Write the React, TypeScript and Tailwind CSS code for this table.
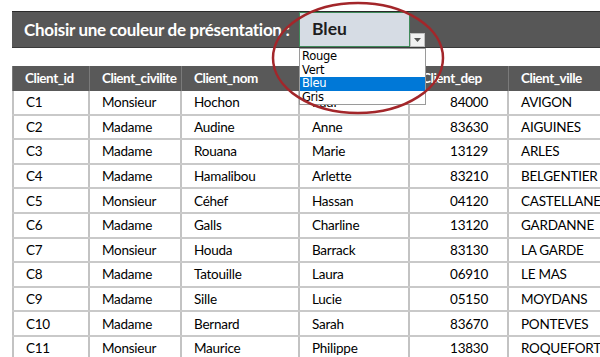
import React from "react";

const rows: string[][] = [
  ["C1", "Monsieur", "Hochon", "Paul", "84000", "AVIGON"],
  ["C2", "Madame", "Audine", "Anne", "83630", "AIGUINES"],
  ["C3", "Madame", "Rouana", "Marie", "13129", "ARLES"],
  ["C4", "Madame", "Hamalibou", "Arlette", "83210", "BELGENTIER"],
  ["C5", "Monsieur", "Céhef", "Hassan", "04120", "CASTELLANE"],
  ["C6", "Madame", "Galls", "Charline", "13120", "GARDANNE"],
  ["C7", "Monsieur", "Houda", "Barrack", "83130", "LA GARDE"],
  ["C8", "Madame", "Tatouille", "Laura", "06910", "LE MAS"],
  ["C9", "Madame", "Sille", "Lucie", "05150", "MOYDANS"],
  ["C10", "Madame", "Bernard", "Sarah", "83670", "PONTEVES"],
  ["C11", "Monsieur", "Maurice", "Philippe", "13830", "ROQUEFORT LES PINS"],
];

const headers = ["Client_id", "Client_civilite", "Client_nom", "Client_prenom", "Client_dep", "Client_ville"];

const grid = "grid grid-cols-[78px_92px_118px_110px_99px_140px]";

export default function App() {
  return (
    <div
      className="relative w-[600px] h-[357px] overflow-hidden bg-white pt-[11px] pl-[12px]"
      style={{ fontFamily: "Lato, 'Open Sans', sans-serif" }}
    >
      {/* Title bar */}
      <div className="flex h-[37px] w-[637px] items-stretch bg-[#575757] border-t border-t-[#2a2a2a] border-b border-b-[#3a3a3a]">
        <div className="flex w-[287px] items-center whitespace-nowrap pl-[12px] text-[17px] font-bold tracking-[-0.3px] text-white">
          Choisir une couleur de présentation :
        </div>
        <div className="flex w-[111px] items-center border border-[#3f8a5a] bg-[#d6dce4] pl-[12px] text-[17.5px] font-bold text-[#1e1e1e]">
          Bleu
        </div>
        <div className="flex flex-col justify-end">
          <div className="flex h-[14px] w-[15px] items-center justify-center border border-[#bfbfbf] bg-[#f2f2f2]">
            <svg width="7" height="4" viewBox="0 0 7 4">
              <path d="M0 0 L7 0 L3.5 4 Z" fill="#555" />
            </svg>
          </div>
        </div>
      </div>

      {/* Table */}
      <div className="mt-[18px] w-[637px]">
        <div className={`${grid} h-[25px] bg-[#595959] text-[13.5px] font-bold tracking-[-0.45px] text-white`}>
          {headers.map((h, i) => (
            <div
              key={h}
              className={`flex items-center whitespace-nowrap border-r border-r-[#7a7a7a] ${i === 0 ? "border-l border-l-[#7a7a7a]" : ""} pl-[12px]`}
            >
              {h}
            </div>
          ))}
        </div>
        {rows.map((r) => (
          <div key={r[0]} className={`${grid} h-[24.6px] border-b-2 border-b-[#c9c9c9] text-[13.5px] tracking-[-0.25px] text-black`}>
            {r.map((c, i) => (
              <div
                key={i}
                className={`flex items-center border-r-2 border-r-[#c3c3c3] ${i === 0 ? "border-l-2 border-l-[#c3c3c3]" : ""} ${
                  i === 4 ? "justify-end pr-[19px]" : "pl-[12px]"
                } whitespace-nowrap overflow-hidden`}
              >
                {c}
              </div>
            ))}
          </div>
        ))}
      </div>

      {/* Dropdown list */}
      <div
        className="absolute left-[299px] top-[48px] w-[127px] border border-[#9a9a9a] bg-white pt-[1px] text-[11.5px] leading-[13.5px] text-black"
        style={{ fontFamily: "'DejaVu Sans', Tahoma, sans-serif" }}
      >
        <div className="pl-[2px] tracking-[-0.3px]">Rouge</div>
        <div className="pl-[2px] tracking-[-0.3px]">Vert</div>
        <div className="bg-[#0078d7] pl-[2px] tracking-[-0.3px] text-white">Bleu</div>
        <div className="pl-[2px] tracking-[-0.3px]">Gris</div>
      </div>

      {/* Red ellipse highlight */}
      <svg className="pointer-events-none absolute left-0 top-0" width="600" height="357">
        <ellipse cx="358" cy="58" rx="85" ry="55" fill="none" stroke="#a3262a" strokeWidth="2.5" />
      </svg>
    </div>
  );
}
